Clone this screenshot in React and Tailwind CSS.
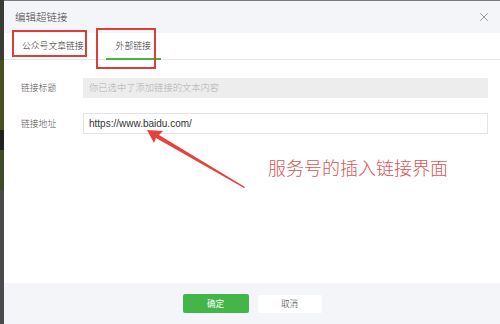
import { X } from 'lucide-react'

export default function App() {
  const font = { fontFamily: '"Noto Sans CJK SC", "Liberation Sans", sans-serif' }

  return (
    <div className="relative flex w-[500px] h-[324px] overflow-hidden bg-[#2f2f2a]" style={font}>
      {/* page behind the dialog */}
      <div className="w-[4px] flex flex-col">
        <div className="h-[60px] bg-[#3b3b36]" />
        <div className="h-[70px] bg-[#4a4f1e]" />
        <div className="h-[20px] bg-[#1f2220]" />
        <div className="h-[40px] bg-[#3e4a2a]" />
        <div className="flex-1 bg-[#4a4a4a]" />
      </div>

      {/* dialog */}
      <div className="flex-1 flex flex-col bg-white border-t border-[#7a7a7a]">
        <div className="h-[32px] flex items-center justify-between bg-[#f4f5f9] pl-[11px] pr-[9px]">
          <span className="text-[10.5px] font-light text-[#444]">编辑超链接</span>
          <X size={14} strokeWidth={1.5} className="text-[#8a8a8a]" />
        </div>

        <div className="h-[27px] flex items-end border-b border-[#e4e6eb] pl-[18px]">
          <div className="h-full flex items-center text-[8.8px] font-light text-[#333] pr-[22px]">公众号文章链接</div>
          <div className="h-full flex items-center px-[10px] border-b-2 border-[#44b549] text-[8.8px] font-light text-[#333] -mb-px">
            外部链接
          </div>
        </div>

        <div className="flex-1 flex flex-col pt-[18px] pl-[17px] pr-[12px]">
          <div className="flex items-center h-[20px]">
            <span className="w-[62px] text-[8.8px] font-light text-[#555]">链接标题</span>
            <div className="flex-1 h-full flex items-center bg-[#ededed] pl-[6px] text-[9.3px] font-light text-[#b0b0b0]">
              你已选中了添加链接的文本内容
            </div>
          </div>
          <div className="flex items-center h-[21px] mt-[15px]">
            <span className="w-[62px] text-[8.8px] font-light text-[#555]">链接地址</span>
            <div className="flex-1 h-full flex items-center bg-white border border-[#e4e4e4] pl-[5px] text-[10px] text-[#333]" style={{ fontFamily: '"Liberation Sans", sans-serif' }}>
              https://www.baidu.com/
            </div>
          </div>
          <div className="mt-[22px] pl-[247px] text-[18px] leading-[22px] font-light text-[#d65656]">服务号的插入链接界面</div>
        </div>

        <div className="h-[41px] flex items-center justify-center gap-[9px] bg-[#f4f5f9]">
          <div className="w-[66px] h-[19px] flex items-center justify-center rounded-[2px] bg-[#44b549] text-[8.6px] text-white">确定</div>
          <div className="w-[64px] h-[18px] flex items-center justify-center rounded-[2px] bg-white text-[8.6px] font-light text-[#333]">取消</div>
        </div>
      </div>

      {/* annotations */}
      <div className="absolute left-[12px] top-[30px] w-[75px] h-[27px] border-2 border-[#dc3f3b]" />
      <div className="absolute left-[96px] top-[28px] w-[60px] h-[41px] border-2 border-[#dc3f3b]" />
      <svg className="absolute inset-0 pointer-events-none" width="500" height="324" viewBox="0 0 500 324">
        <polygon points="147,130 163,131 159,135 245,187 244,188 156,138 154,143" fill="#e8403a" />
      </svg>
    </div>
  )
}
